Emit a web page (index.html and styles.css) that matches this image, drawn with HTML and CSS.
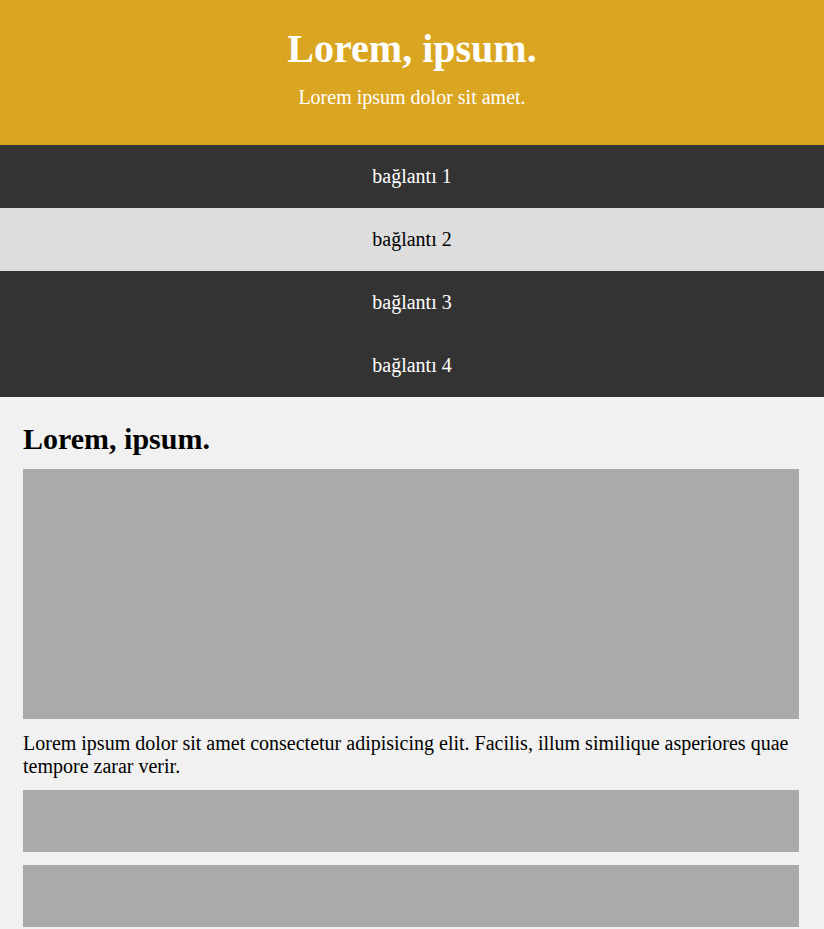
FILE: index.html
```html
<!DOCTYPE html>
<html lang="tr">
<head>
<meta charset="utf-8">
<title>Lorem, ipsum.</title>
<link rel="stylesheet" href="styles.css">
</head>
<body>
<header class="site-header">
  <h1 class="site-title">Lorem, ipsum.</h1>
  <p class="site-sub">Lorem ipsum dolor sit amet.</p>
</header>
<nav class="site-nav">
  <a class="nav-link" href="#">bağlantı 1</a>
  <a class="nav-link nav-link--light" href="#">bağlantı 2</a>
  <a class="nav-link" href="#">bağlantı 3</a>
  <a class="nav-link" href="#">bağlantı 4</a>
</nav>
<main class="content">
  <h2 class="content-title">Lorem, ipsum.</h2>
  <div class="box box--large"></div>
  <p class="content-text">Lorem ipsum dolor sit amet consectetur adipisicing elit. Facilis, illum similique asperiores quae tempore zarar verir.</p>
  <div class="box box--small"></div>
  <div class="box box--small"></div>
</main>
</body>
</html>
```

FILE: styles.css
```css
* {
  box-sizing: border-box;
}

html, body {
  margin: 0;
  padding: 0;
}

body {
  font-family: "Liberation Serif", "Times New Roman", serif;
  font-size: 20px;
  background: #f1f1f1;
  color: #000;
}

.site-header {
  background: #daa520;
  color: #fff;
  text-align: center;
  padding: 26px 0 36px;
}

.site-title {
  margin: 0 0 14px;
  font-size: 40px;
  font-weight: bold;
  line-height: 46px;
}

.site-sub {
  margin: 0;
  font-size: 20px;
  line-height: 23px;
}

.site-nav {
  display: flex;
  flex-direction: column;
  background: #333;
}

.nav-link {
  display: block;
  padding: 20px 0;
  line-height: 23px;
  text-align: center;
  color: #fff;
  text-decoration: none;
  background: #333;
}

.nav-link--light {
  background: #ddd;
  color: #000;
}

.content {
  display: flex;
  flex-direction: column;
  gap: 12.5px;
  padding: 25px 25px 40px 23px;
}

.content-title {
  margin: 0;
  font-size: 30px;
  line-height: 34.5px;
  font-weight: bold;
}

.content-text {
  margin: 0;
  line-height: 23px;
}

.box {
  background: #aaa;
}

.box--large {
  height: 250px;
}

.box--small {
  height: 62px;
}
```
